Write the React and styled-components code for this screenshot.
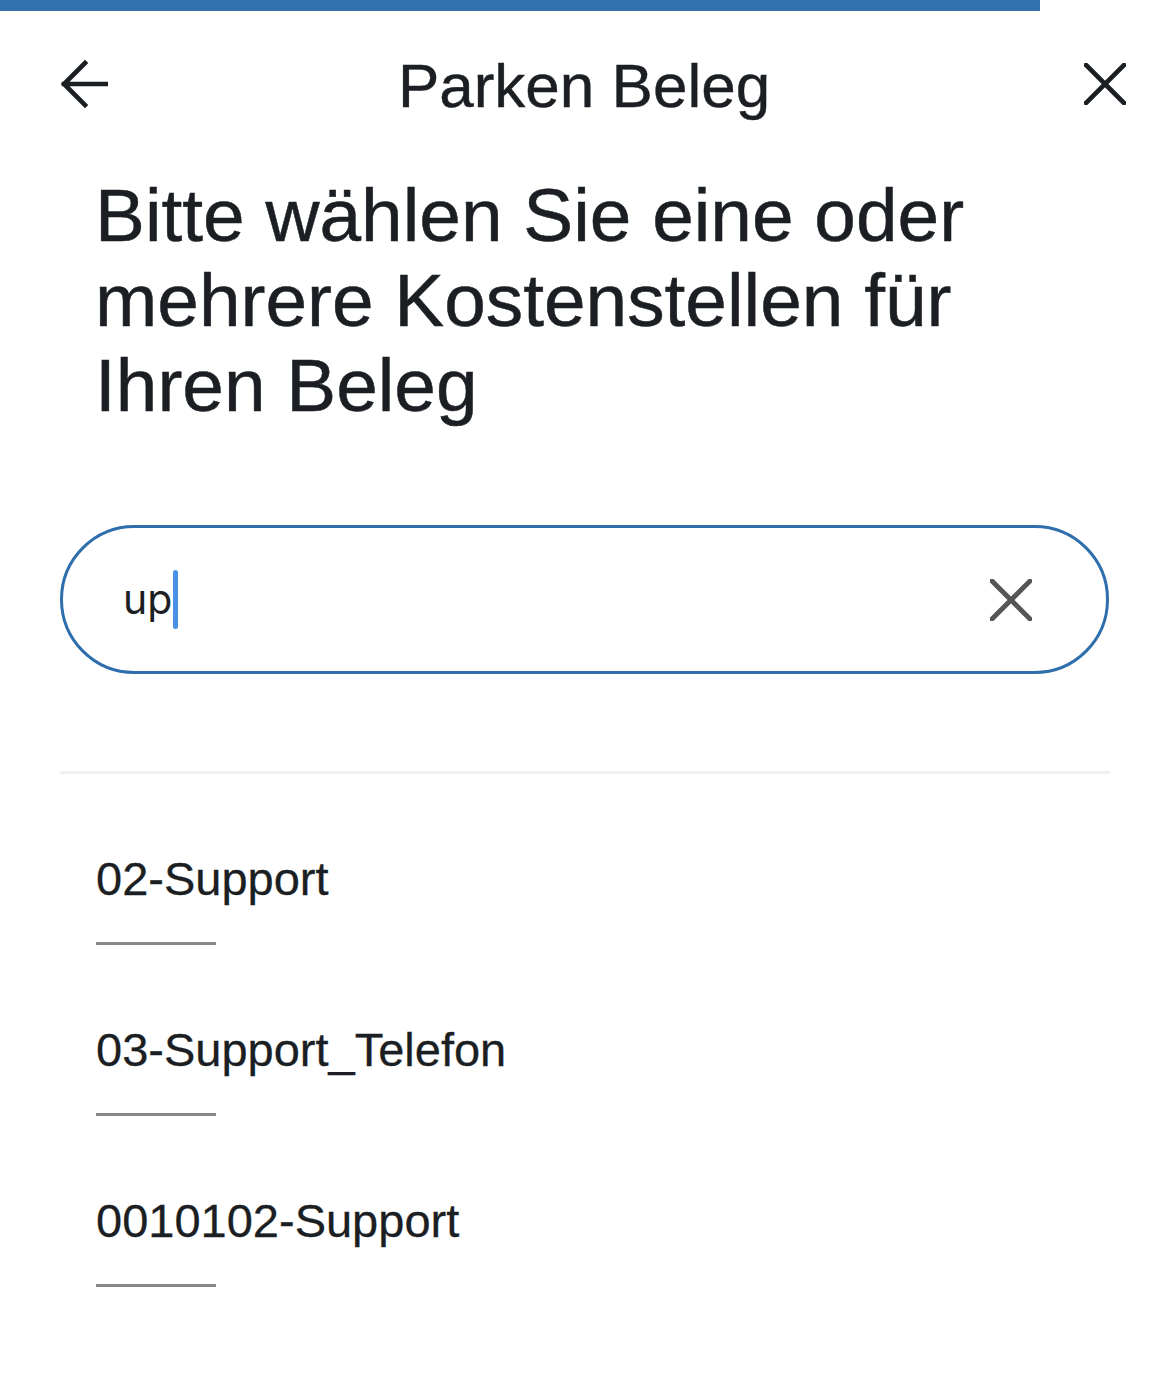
import React from 'react';
import styled, { createGlobalStyle } from 'styled-components';

const GlobalStyle = createGlobalStyle`
  html, body {
    margin: 0;
    padding: 0;
    background: #ffffff;
  }
  body {
    font-family: "Liberation Sans", Arial, Helvetica, sans-serif;
    color: #1b1f23;
  }
`;

const Page = styled.div`
  width: 1170px;
  min-height: 1383px;
  background: #ffffff;
  display: flex;
  flex-direction: column;
`;

const ProgressTrack = styled.div`
  height: 11px;
  width: 100%;
`;

const ProgressFill = styled.div`
  height: 100%;
  width: ${({ $value }) => $value}%;
  background: #3171b0;
`;

const Header = styled.header`
  display: grid;
  grid-template-columns: 1fr auto 1fr;
  align-items: center;
  height: 146px;
  padding: 0 44px 0 60px;
`;

const IconButton = styled.button`
  border: 0;
  background: transparent;
  padding: 0;
  margin: 0;
  display: flex;
  align-items: center;
  justify-content: center;
  cursor: pointer;
  justify-self: ${({ $align }) => ($align === 'end' ? 'end' : 'start')};
  color: ${({ $tone }) => $tone || '#1b1f23'};
`;

const Title = styled.h1`
  margin: 0 18px 0 0;
  font-size: 62px;
  font-weight: 400;
  line-height: 1;
  padding-top: 4px;
  color: #1b1f23;
  -webkit-text-stroke: 0.4px #1b1f23;
`;

const Heading = styled.h2`
  margin: 16px 90px 0 95px;
  font-size: 74.8px;
  line-height: 85px;
  font-weight: 400;
  color: #1b1f23;
  -webkit-text-stroke: 0.5px #1b1f23;
`;

const SearchBox = styled.div`
  box-sizing: border-box;
  margin: 97px 61px 0 60px;
  height: 149px;
  border: 3px solid #2f6ead;
  border-radius: 75px;
  display: flex;
  align-items: center;
  padding: 0 74px 0 60px;
`;

const SearchValue = styled.div`
  flex: 1;
  display: flex;
  align-items: center;
  font-family: Inter, "Liberation Sans", sans-serif;
  font-size: 41px;
  color: #1b1f23;
  line-height: 1;
`;

const Caret = styled.span`
  display: inline-block;
  width: 5px;
  height: 59px;
  border-radius: 3px;
  background: #4a90e6;
  margin-left: 1px;
`;

const Divider = styled.hr`
  margin: 97px 60px 0 60px;
  border: 0;
  height: 3px;
  background: #f1f1f1;
`;

const List = styled.ul`
  list-style: none;
  margin: 0;
  padding: 0 60px 0 96px;
`;

const Item = styled.li`
  padding-top: 77px;
  cursor: pointer;
`;

const ItemLabel = styled.div`
  font-size: 47px;
  line-height: 56px;
  color: #1b1f23;
  -webkit-text-stroke: 0.3px #1b1f23;
`;

const ItemRule = styled.div`
  margin-top: 35px;
  width: 120px;
  height: 3px;
  background: #888888;
`;

const BackIcon = () => (
  <svg width="48" height="48" viewBox="0 0 48 48" fill="none">
    <path d="M47 24H4M25 3L4 24l21 21" stroke="currentColor" strokeWidth="4.6" strokeLinecap="square" />
  </svg>
);

const CloseIcon = ({ size, weight }) => (
  <svg width={size} height={size} viewBox="0 0 42 42" fill="none">
    <path d="M2 2l38 38M40 2L2 40" stroke="currentColor" strokeWidth={weight} strokeLinecap="square" />
  </svg>
);

const centers = ['02-Support', '03-Support_Telefon', '0010102-Support'];

export default function App() {
  return (
    <Page>
      <GlobalStyle />
      <ProgressTrack>
        <ProgressFill $value={88.9} />
      </ProgressTrack>
      <Header>
        <IconButton aria-label="Zurück">
          <BackIcon />
        </IconButton>
        <Title>Parken Beleg</Title>
        <IconButton $align="end" aria-label="Schließen">
          <CloseIcon size={42} weight={4.6} />
        </IconButton>
      </Header>
      <Heading>Bitte wählen Sie eine oder mehrere Kostenstellen für Ihren Beleg</Heading>
      <SearchBox>
        <SearchValue>
          up<Caret />
        </SearchValue>
        <IconButton $tone="#555555" aria-label="Suche löschen">
          <CloseIcon size={42} weight={4.8} />
        </IconButton>
      </SearchBox>
      <Divider />
      <List>
        {centers.map((c) => (
          <Item key={c}>
            <ItemLabel>{c}</ItemLabel>
            <ItemRule />
          </Item>
        ))}
      </List>
    </Page>
  );
}
